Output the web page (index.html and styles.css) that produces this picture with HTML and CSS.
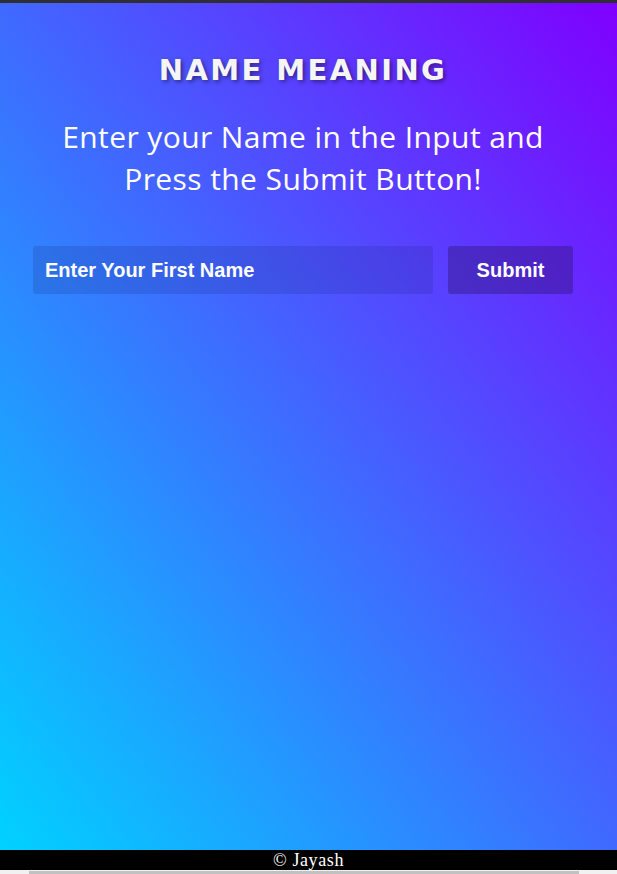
FILE: index.html
```html
<!DOCTYPE html>
<html>
<head>
<meta charset="utf-8">
<link rel="stylesheet" href="styles.css">
</head>
<body>
<div class="topbar"></div>
<main class="page">
  <div class="content">
    <h1 class="title">NAME MEANING</h1>
    <p class="subtitle">Enter your Name in the Input and<br>Press the Submit Button!</p>
    <form class="form">
      <input class="name-input" type="text" placeholder="Enter Your First Name">
      <button class="submit" type="button">Submit</button>
    </form>
  </div>
</main>
<footer class="footer">© Jayash</footer>
<div class="hscroll"><div class="hscroll-thumb"></div></div>
</body>
</html>
```
FILE: styles.css
```css
html, body {
  margin: 0;
  padding: 0;
  overflow: hidden;
}
body {
  width: 617px;
  height: 874px;
  background: #f1f1f1;
}
.topbar {
  height: 3px;
  background: #2f2f33;
}
.page {
  height: 847px;
  background: linear-gradient(to top right, #00d2ff, #7f00ff);
  box-sizing: border-box;
}
.content {
  width: 606px;
  display: flex;
  flex-direction: column;
  align-items: center;
}
.title {
  margin: 50px 0 0;
  font-family: "DejaVu Sans", Verdana, sans-serif;
  font-weight: bold;
  font-size: 29px;
  line-height: 34px;
  letter-spacing: 2.4px;
  color: #f5f5f5;
  text-shadow: 2px 2px 4px rgba(0, 0, 0, 0.45);
}
.subtitle {
  margin: 29px 0 0;
  font-family: "Open Sans", sans-serif;
  font-size: 30px;
  line-height: 42px;
  color: #ffffff;
  text-align: center;
  letter-spacing: 0.4px;
}
.form {
  margin-top: 46px;
  display: flex;
  gap: 15px;
}
.name-input {
  width: 400px;
  height: 48px;
  box-sizing: border-box;
  border: none;
  border-radius: 3px;
  background: rgba(20, 40, 120, 0.18);
  padding: 0 12px;
  font-family: "Liberation Sans", Arial, sans-serif;
  font-weight: bold;
  font-size: 20px;
  color: #fff;
  outline: none;
}
.name-input::placeholder {
  color: #fff;
  opacity: 1;
}
.submit {
  width: 125px;
  height: 48px;
  border: none;
  border-radius: 3px;
  background: rgba(45, 20, 110, 0.4);
  font-family: "Liberation Sans", Arial, sans-serif;
  font-weight: bold;
  font-size: 20px;
  color: #fff;
}
.footer {
  height: 20px;
  background: #000;
  color: #fff;
  font-family: "Liberation Serif", "Times New Roman", serif;
  font-size: 18px;
  line-height: 20px;
  letter-spacing: 0.6px;
  text-align: center;
}
.hscroll {
  height: 4px;
  background: #f1f1f1;
  padding: 1px 0 0 29px;
}
.hscroll-thumb {
  width: 550px;
  height: 3px;
  background: #c1c1c1;
}
```
